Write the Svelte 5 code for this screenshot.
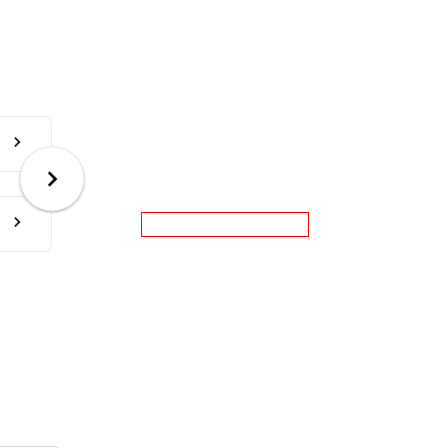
<script>
  const cards = ['First item', 'Second item'];
  let value = $state('');
</script>

{#snippet chevron(size)}
  <svg width={size} height={size} viewBox="0 0 24 24" aria-hidden="true">
    <path d="M10.2 6 8.79 7.41 13.37 12l-4.58 4.59L10.2 18l6-6z" fill="currentColor" stroke="currentColor" stroke-width="0.2" />
  </svg>
{/snippet}

<main class="page">
  <div class="row">
    <section class="carousel">
      {#each cards as card}
        <a class="card" href="#next" aria-label={card}>{@render chevron(20)}</a>
      {/each}
      <button class="next" type="button" aria-label="Next">{@render chevron(30)}</button>
    </section>
    <input class="field" type="text" aria-label="Value" bind:value />
  </div>
  <section class="panel"></section>
</main>

<style>
  :global(body) {
    margin: 0;
    background: #fff;
    font-family: Roboto, sans-serif;
  }
  .page {
    box-sizing: border-box;
    height: 100vh;
    padding-top: 116px;
    overflow: hidden;
  }
  .row {
    display: flex;
    align-items: flex-start;
  }
  .carousel {
    position: relative;
    display: flex;
    flex-direction: column;
    gap: 24px;
    width: 52px;
    flex: none;
  }
  .card {
    box-sizing: border-box;
    display: flex;
    align-items: center;
    justify-content: flex-end;
    height: 56px;
    padding: 0 24px 4px 0;
    border: 1px solid #e6e7e9;
    border-left: 0;
    border-radius: 0 8px 8px 0;
    color: #16181d;
  }
  svg {
    display: block;
    flex: none;
  }
  .next {
    position: absolute;
    top: 31px;
    right: -32px;
    display: flex;
    align-items: center;
    justify-content: center;
    width: 64px;
    height: 64px;
    padding: 0;
    border: 0;
    border-radius: 50%;
    background: #fff;
    color: #000;
    box-shadow: 0 1px 3px rgba(30, 45, 50, 0.4), 0 0 1px rgba(30, 45, 50, 0.2);
    cursor: pointer;
  }
  .field {
    box-sizing: border-box;
    width: 168px;
    height: 25px;
    margin: 96px 0 0 89px;
    padding: 0 4px;
    border: 1px solid #f00;
    border-radius: 0;
    outline: 0;
    background: #fff;
  }
  .panel {
    box-sizing: border-box;
    width: 62px;
    height: 56px;
    margin-top: 194px;
    border: 1px solid #d8d8d8;
    border-left: 0;
    border-radius: 0 8px 8px 0;
  }
</style>
